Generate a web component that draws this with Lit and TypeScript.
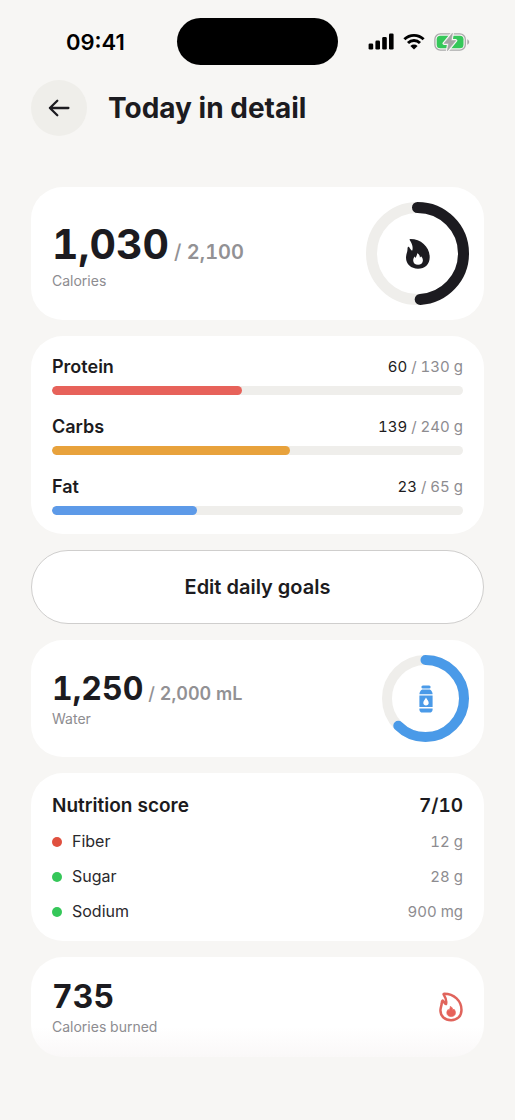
import { LitElement, html, css, svg } from "lit";
import { customElement, property } from "lit/decorators.js";

const FLAME =
  "M3.7 1C3.3.4 3.7 0 4.4 0 15.2 0 23.7 8 23.7 18.2 23.7 25.2 18.9 29.7 12 29.7 5 29.7 0 25.4 0 18.6 0 15.6 1.3 13.7 1.5 10.6 1.5 9 1.6 8 2.3 7.7 3.1 7.4 3.4 8.5 4 9.4 4.7 10.6 5.6 11.4 6.3 11.6 7.3 8 6 4.6 3.7 1Z";
const FLAME_CORE =
  "M11.1 14.2C13.4 15.1 13.9 16.8 13.9 18.6 14.6 18.3 14.8 17.8 15 17.2 16.4 18.6 16.9 20 16.9 21.4 16.9 24.2 14.7 25.7 12.1 25.7 9.3 25.7 7.2 24 7.2 21.4 7.2 19.8 7.8 18.6 8.8 17.6 9 18.3 9.3 18.7 9.9 18.9 9.9 17.2 11.4 16 11.1 14.2Z";

const sheet = css`
  :host {
    display: block;
    font-variant-numeric: tabular-nums;
  }
  .card {
    background: #fff;
    border-radius: 32px;
    padding: 20px 21px;
  }
`;

/** Circular progress with an icon slotted in its middle. */
@customElement("progress-ring")
export class ProgressRing extends LitElement {
  @property({ type: Number }) size = 100;
  @property({ type: Number }) stroke = 10;
  @property({ type: Number }) value = 0;
  @property() color = "#1c1b20";

  static styles = css`
    :host {
      display: grid;
      place-items: center;
      flex: none;
    }
    .ring,
    .icon {
      grid-area: 1 / 1;
    }
    .icon {
      display: grid;
    }
    .track,
    .value {
      fill: none;
    }
    .track {
      stroke: #efeeeb;
    }
    .value {
      stroke-linecap: round;
    }
  `;

  render() {
    const c = this.size / 2;
    const r = (this.size - this.stroke) / 2;
    return html`
      <svg class="ring" width=${this.size} height=${this.size} aria-hidden="true">
        <circle class="track" cx=${c} cy=${c} r=${r} stroke-width=${this.stroke} />
        <circle
          class="value"
          cx=${c}
          cy=${c}
          r=${r}
          stroke=${this.color}
          stroke-width=${this.stroke}
          pathLength="100"
          stroke-dasharray="${this.value * 100} 100"
          transform="rotate(-90 ${c} ${c})"
        />
      </svg>
      <span class="icon"><slot></slot></span>
    `;
  }
}

@customElement("status-bar")
export class StatusBar extends LitElement {
  static styles = css`
    :host {
      display: grid;
      grid-template-columns: 1fr auto 1fr;
      align-items: center;
      padding: 18px 31px 0;
    }
    .time {
      padding-left: 35px;
      font-size: 22px;
      line-height: 26px;
      font-weight: 600;
      color: #000;
    }
    .island {
      width: 161px;
      height: 47px;
      border-radius: 24px;
      background: #000;
    }
    .status {
      display: flex;
      justify-content: flex-end;
      align-items: center;
      gap: 9px;
      padding-right: 14px;
    }
  `;

  render() {
    return html`
      <span class="time">09:41</span>
      <span class="island"></span>
      <span class="status">
        <svg width="26" height="17" viewBox="0 0 26 17" aria-hidden="true">
          <rect x=".6" y="10.5" width="4.6" height="6" rx="1.3" />
          <rect x="7.4" y="7.6" width="4.6" height="8.9" rx="1.3" />
          <rect x="14.2" y="4.1" width="4.6" height="12.4" rx="1.3" />
          <rect x="21" y=".4" width="4.6" height="16.1" rx="1.3" />
        </svg>
        <svg width="22" height="17" viewBox="0 0 22 17" aria-hidden="true">
          <g fill="none" stroke="#000" stroke-width="2.9">
            <path d="M1.4 6.3A13.6 13.6 0 0 1 20.6 6.3" />
            <path d="M5 10A8.5 8.5 0 0 1 17 10" />
          </g>
          <path d="M11 16.6 7.4 12.9A5.2 5.2 0 0 1 14.6 12.9Z" />
        </svg>
        <svg width="36" height="18" viewBox="0 0 36 18" aria-hidden="true">
          <rect x=".9" y=".9" width="30.4" height="16.2" rx="5.4" fill="none" stroke="#a9a9a9" stroke-width="1.3" />
          <rect x="2.7" y="2.7" width="26.8" height="12.6" rx="3.6" fill="#35c759" />
          <path d="M33.3 6.2C34.5 6.8 35.2 7.8 35.2 9S34.5 11.2 33.3 11.8Z" fill="#a9a9a9" />
          <path
            d="M18.4.2 10 10.4H14.6L13.4 17.8 21.8 7.6H17.2Z"
            fill="#a5a5a5"
            stroke="#f7f6f4"
            stroke-width="3"
            stroke-linejoin="round"
          />
          <path d="M18.4.2 10 10.4H14.6L13.4 17.8 21.8 7.6H17.2Z" fill="#a5a5a5" stroke="#a5a5a5" stroke-width=".6" />
        </svg>
      </span>
    `;
  }
}

/** Large figure with an optional goal and a caption beneath. */
@customElement("stat-card")
export class StatCard extends LitElement {
  @property() amount = "";
  @property() goal = "";
  @property() caption = "";
  @property() variant = "medium";

  static styles = [
    sheet,
    css`
      .card {
        display: flex;
        align-items: center;
        justify-content: space-between;
      }
      .ringed {
        padding: 15px 15px 15px 21px;
      }
      .fading {
        background: linear-gradient(#fff 70%, #faf8f8);
      }
      .figure {
        display: flex;
        align-items: baseline;
        gap: 5px;
        color: #1c1b20;
        font-weight: 700;
        font-size: 32px;
        line-height: 40px;
      }
      .large {
        font-size: 41px;
        line-height: 54px;
      }
      .goal {
        font-size: 18px;
        line-height: 24px;
        font-weight: 600;
        color: #929194;
      }
      .large .goal {
        font-size: 20px;
      }
      .slash {
        font-weight: 500;
      }
      .caption {
        font-size: 14px;
        line-height: 20px;
        color: #8d8c90;
      }
    `,
  ];

  render() {
    return html`
      <section class="card ${this.goal ? "ringed" : "fading"}">
        <div>
          <div class="figure ${this.variant}">
            <span>${this.amount}</span>
            ${this.goal ? html`<span class="goal"><span class="slash">/</span> ${this.goal}</span>` : ""}
          </div>
          <div class="caption">${this.caption}</div>
        </div>
        <slot></slot>
      </section>
    `;
  }
}

@customElement("macro-card")
export class MacroCard extends LitElement {
  static styles = [
    sheet,
    css`
      .card {
        display: grid;
        gap: 20px;
        padding: 19px 21px;
      }
      .macro {
        display: grid;
        gap: 7px;
      }
      .row {
        display: flex;
        justify-content: space-between;
        align-items: center;
        line-height: 24px;
      }
      .name {
        font-size: 18px;
        font-weight: 600;
        color: #1c1b20;
      }
      .value {
        display: flex;
        gap: 4px;
        font-size: 15px;
        color: #8d8c90;
      }
      .eaten {
        color: #1c1b20;
      }
      .track {
        height: 9px;
        border-radius: 5px;
        background: #efeeeb;
        overflow: hidden;
      }
      .fill {
        height: 100%;
        border-radius: 5px;
      }
      .protein {
        background: #e7625a;
      }
      .carbs {
        background: #e8a23c;
      }
      .fat {
        background: #5d9ae8;
      }
    `,
  ];

  private macros = [
    { id: "protein", name: "Protein", eaten: 60, goal: 130 },
    { id: "carbs", name: "Carbs", eaten: 139, goal: 240 },
    { id: "fat", name: "Fat", eaten: 23, goal: 65 },
  ];

  render() {
    return html`
      <section class="card">
        ${this.macros.map(
          (m) => html`
            <div class="macro">
              <div class="row">
                <span class="name">${m.name}</span>
                <span class="value">
                  <span class="eaten">${m.eaten}</span> <span>/</span> <span>${m.goal} g</span>
                </span>
              </div>
              <div class="track">
                <div class="fill ${m.id}" style="width:${(m.eaten / m.goal) * 100}%"></div>
              </div>
            </div>
          `
        )}
      </section>
    `;
  }
}

@customElement("nutrition-card")
export class NutritionCard extends LitElement {
  static styles = [
    sheet,
    css`
      .card {
        display: grid;
        gap: 12px;
        padding-bottom: 19px;
      }
      .head,
      .item {
        display: flex;
        justify-content: space-between;
        margin: 0;
      }
      .head {
        font-size: 19px;
        line-height: 26px;
        font-weight: 600;
        color: #1c1b20;
      }
      .title {
        margin: 0;
        font: inherit;
      }
      .list {
        display: grid;
        gap: 14px;
        margin: 0;
        padding: 0;
        list-style: none;
      }
      .item {
        align-items: center;
        font-size: 16px;
        line-height: 21px;
      }
      .label {
        display: flex;
        align-items: center;
        gap: 10px;
        color: #2a292d;
      }
      .dot {
        width: 10px;
        height: 10px;
        border-radius: 50%;
        background: #35c759;
      }
      .low {
        background: #e0503f;
      }
      .amount {
        font-size: 15px;
        color: #8d8c90;
      }
    `,
  ];

  private items = [
    { name: "Fiber", amount: "12 g", state: "low" },
    { name: "Sugar", amount: "28 g", state: "good" },
    { name: "Sodium", amount: "900 mg", state: "good" },
  ];

  render() {
    return html`
      <section class="card">
        <div class="head">
          <h2 class="title">Nutrition score</h2>
          <span>7/10</span>
        </div>
        <ul class="list">
          ${this.items.map(
            (i) => html`
              <li class="item">
                <span class="label"><span class="dot ${i.state}"></span>${i.name}</span>
                <span class="amount">${i.amount}</span>
              </li>
            `
          )}
        </ul>
      </section>
    `;
  }
}

@customElement("app-root")
export class AppRoot extends LitElement {
  static styles = css`
    :host {
      display: block;
      box-sizing: border-box;
      min-height: 100vh;
      background: #f7f6f4;
      font-family: Inter, "Liberation Sans", sans-serif;
      color: #1c1b20;
    }
    .header {
      display: flex;
      align-items: center;
      gap: 21px;
      padding: 15px 31px 0;
    }
    .back {
      display: grid;
      place-items: center;
      width: 56px;
      height: 56px;
      padding: 0;
      border: 0;
      border-radius: 50%;
      background: #efeeea;
    }
    .title {
      margin: 0;
      font-size: 28px;
      line-height: 34px;
      font-weight: 700;
    }
    .content {
      display: grid;
      gap: 16px;
      padding: 51px 31px 64px;
    }
    .edit {
      height: 74px;
      border: 1px solid #cfcecd;
      border-radius: 37px;
      background: #fff;
      font: 600 20px/26px Inter, "Liberation Sans", sans-serif;
      color: #1c1b20;
    }
  `;

  private bottle = svg`
    <svg width="14" height="28" viewBox="0 0 14 28" fill="#4a9ae8" aria-hidden="true">
      <rect x="2.4" y=".4" width="9.2" height="3.1" rx="1.5" />
      <path d="M3.2 4.6H10.8C12.6 5.6 13.5 7.2 13.6 9.2H.4C.5 7.2 1.4 5.6 3.2 4.6Z" />
      <path fill-rule="evenodd" d="M.4 10.5H13.6V22H.4ZM7 12.6C6 14.6 4.3 16 4.3 17.9 4.3 19.4 5.5 20.4 7 20.4S9.7 19.4 9.7 17.9C9.7 16 8 14.6 7 12.6Z" />
      <path d="M.4 23.4H13.6V24.4C13.6 26.3 12.4 27.5 10.5 27.5H3.5C1.6 27.5.4 26.3.4 24.4Z" />
    </svg>
  `;

  render() {
    return html`
      <status-bar></status-bar>
      <header class="header">
        <button class="back" type="button" aria-label="Back">
          <svg width="22" height="18" viewBox="0 0 22 18" fill="none" stroke="#1c1b20" stroke-width="2.3" stroke-linecap="round" stroke-linejoin="round" aria-hidden="true">
            <path d="M9.3 1.8 1.9 9 9.3 16.2M1.9 9H20.4" />
          </svg>
        </button>
        <h1 class="title">Today in detail</h1>
      </header>
      <main class="content">
        <stat-card amount="1,030" goal="2,100" caption="Calories" variant="large">
          <progress-ring size="103" stroke="11" value=${1030 / 2100} color="#1c1b20">
            <svg width="24" height="30" viewBox="0 0 24 30" aria-hidden="true">
              <path d=${FLAME} fill="#1c1b20" />
              <path d=${FLAME_CORE} fill="#fff" />
            </svg>
          </progress-ring>
        </stat-card>
        <macro-card></macro-card>
        <button class="edit" type="button">Edit daily goals</button>
        <stat-card amount="1,250" goal="2,000 mL" caption="Water">
          <progress-ring size="87" stroke="10" value=${1250 / 2000} color="#4a9ae8">${this.bottle}</progress-ring>
        </stat-card>
        <nutrition-card></nutrition-card>
        <stat-card amount="735" caption="Calories burned">
          <svg width="24" height="30" viewBox="-1.6 -1.6 27 33" aria-hidden="true">
            <path d=${FLAME} fill="none" stroke="#e0645c" stroke-width="2.8" stroke-linejoin="round" />
            <path d=${FLAME_CORE} fill="#e7625a" stroke="#e7625a" stroke-width=".8" />
          </svg>
        </stat-card>
      </main>
    `;
  }
}
